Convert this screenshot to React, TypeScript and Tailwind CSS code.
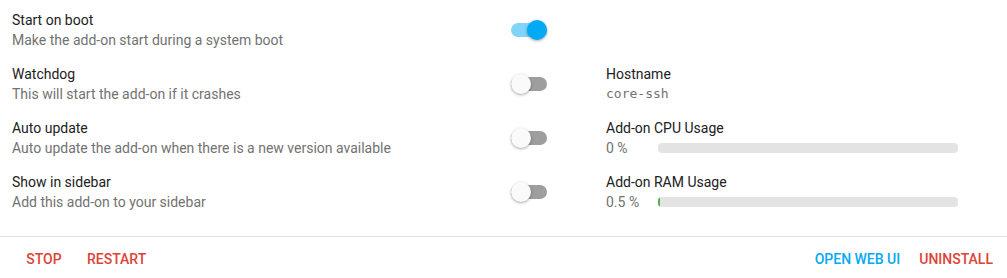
import React from "react";

type Row = {
  title: string;
  desc: string;
  on: boolean;
  right?: React.ReactNode;
};

function Toggle({ on }: { on: boolean }) {
  return (
    <div className="relative w-[36px] h-[20px] shrink-0">
      <div
        className={
          on
            ? "absolute left-0 right-0 top-[3px] h-[14px] rounded-full bg-[#81d4fa]"
            : "absolute left-0 right-0 top-[3px] h-[14px] rounded-full bg-[#9e9e9e]"
        }
      />
      <div
        className={
          on
            ? "absolute top-0 right-0 w-[20px] h-[20px] rounded-full bg-[#03a9f4] shadow-[0_1px_3px_rgba(0,0,0,0.35)]"
            : "absolute top-0 left-0 w-[20px] h-[20px] rounded-full bg-[#fafafa] shadow-[0_1px_3px_rgba(0,0,0,0.35)]"
        }
      />
    </div>
  );
}

function Bar({ label, pct }: { label: string; pct: number }) {
  return (
    <div className="flex items-center h-[20px]">
      <div className="w-[52px] text-[14px] leading-[20px] text-[#727272]">{label}</div>
      <div className="w-[300px] h-[10px] rounded-[4px] bg-[#e3e3e3] overflow-hidden">
        {pct > 0 && (
          <div
            className="h-full rounded-[4px] bg-[#4caf50]"
            style={{ width: `${Math.max(2, (pct / 100) * 300)}px` }}
          />
        )}
      </div>
    </div>
  );
}

export default function App() {
  const rows: Row[] = [
    { title: "Start on boot", desc: "Make the add-on start during a system boot", on: true },
    {
      title: "Watchdog",
      desc: "This will start the add-on if it crashes",
      on: false,
      right: (
        <div>
          <div className="text-[14px] leading-[20px] text-[#212121]">Hostname</div>
          <div className="text-[13px] leading-[20px] text-[#727272] font-['DejaVu_Sans_Mono',monospace]">
            core-ssh
          </div>
        </div>
      ),
    },
    {
      title: "Auto update",
      desc: "Auto update the add-on when there is a new version available",
      on: false,
      right: (
        <div>
          <div className="text-[14px] leading-[20px] text-[#212121]">Add-on CPU Usage</div>
          <Bar label="0 %" pct={0} />
        </div>
      ),
    },
    {
      title: "Show in sidebar",
      desc: "Add this add-on to your sidebar",
      on: false,
      right: (
        <div>
          <div className="text-[14px] leading-[20px] text-[#212121]">Add-on RAM Usage</div>
          <Bar label="0.5 %" pct={0.5} />
        </div>
      ),
    },
  ];

  const btn =
    "h-[36px] min-w-[64px] px-2 text-[14px] font-medium tracking-normal uppercase";

  return (
    <div className="w-[1007px] h-[278px] bg-white font-['Roboto',sans-serif] overflow-hidden">
      <div className="flex flex-col gap-[14px] pt-[10px] pb-[24px] pl-[12px]">
        {rows.map((r) => (
          <div key={r.title} className="flex items-center h-[40px]">
            <div className="w-[499px]">
              <div className="text-[14px] leading-[20px] text-[#212121]">{r.title}</div>
              <div className="text-[14px] leading-[20px] text-[#727272]">{r.desc}</div>
            </div>
            <Toggle on={r.on} />
            <div className="ml-[59px] flex-1">{r.right}</div>
          </div>
        ))}
      </div>
      <div className="border-t border-[#e0e0e0] flex items-center justify-between pt-[4px] pl-[12px] pr-[6px]">
        <div className="flex items-center">
          <button className={`${btn} text-[#db4437]`}>Stop</button>
          <button className={`${btn} ml-[3px] text-[#db4437]`}>Restart</button>
        </div>
        <div className="flex items-center">
          <button className={`${btn} text-[#03a9f4]`}>Open Web UI</button>
          <button className={`${btn} ml-[3px] text-[#db4437]`}>Uninstall</button>
        </div>
      </div>
    </div>
  );
}
